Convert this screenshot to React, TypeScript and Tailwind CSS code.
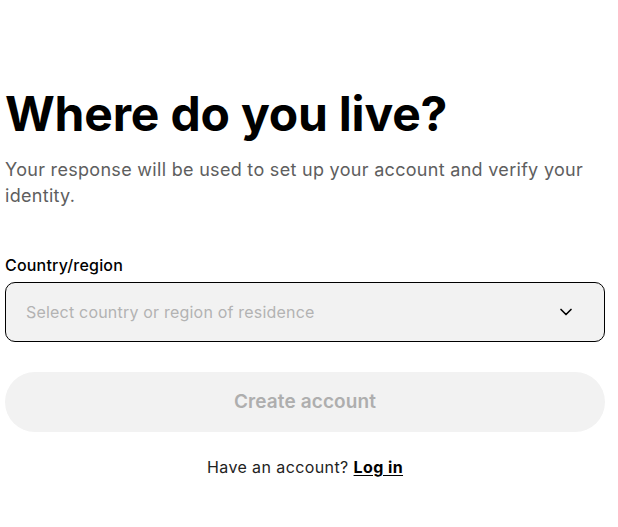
import { ChevronDown } from "lucide-react";

const App = () => {
  return (
    <div
      className="min-h-[527px] bg-white pl-[5px] pt-[82px]"
      style={{ fontFamily: "Inter, 'Liberation Sans', sans-serif" }}
    >
      <div className="w-[600px]">
        <h1 className="text-[48px] font-bold leading-[64px] tracking-[-0.2px] text-black">
          Where do you live?
        </h1>
        <p className="mt-[11px] text-[18px] leading-[26px] tracking-[0.3px] text-[#5e5e5e]">
          Your response will be used to set up your account and verify your identity.
        </p>

        <label className="mt-[44px] block text-[16px] font-medium leading-[24px] tracking-[0.2px] text-black">
          Country/region
        </label>
        <button className="mt-[5px] flex h-[60px] w-full items-center justify-between rounded-[10px] border border-black bg-[#f2f2f2] pl-[20px] pr-[28px]">
          <span className="text-[16px] tracking-[0.2px] text-[#b3b3b3]">
            Select country or region of residence
          </span>
          <ChevronDown size={20} strokeWidth={2} className="text-black" />
        </button>

        <button className="mt-[30px] flex h-[60px] w-full items-center justify-center rounded-full bg-[#f2f2f2] text-[19px] font-semibold tracking-[0.1px] text-[#aeaeae]">
          Create account
        </button>

        <p className="mt-[23px] text-center text-[16px] tracking-[0.4px] text-[#222]">
          Have an account?{" "}
          <a href="#" className="font-bold text-black underline underline-offset-2">
            Log in
          </a>
        </p>
      </div>
    </div>
  );
};

export default App;
